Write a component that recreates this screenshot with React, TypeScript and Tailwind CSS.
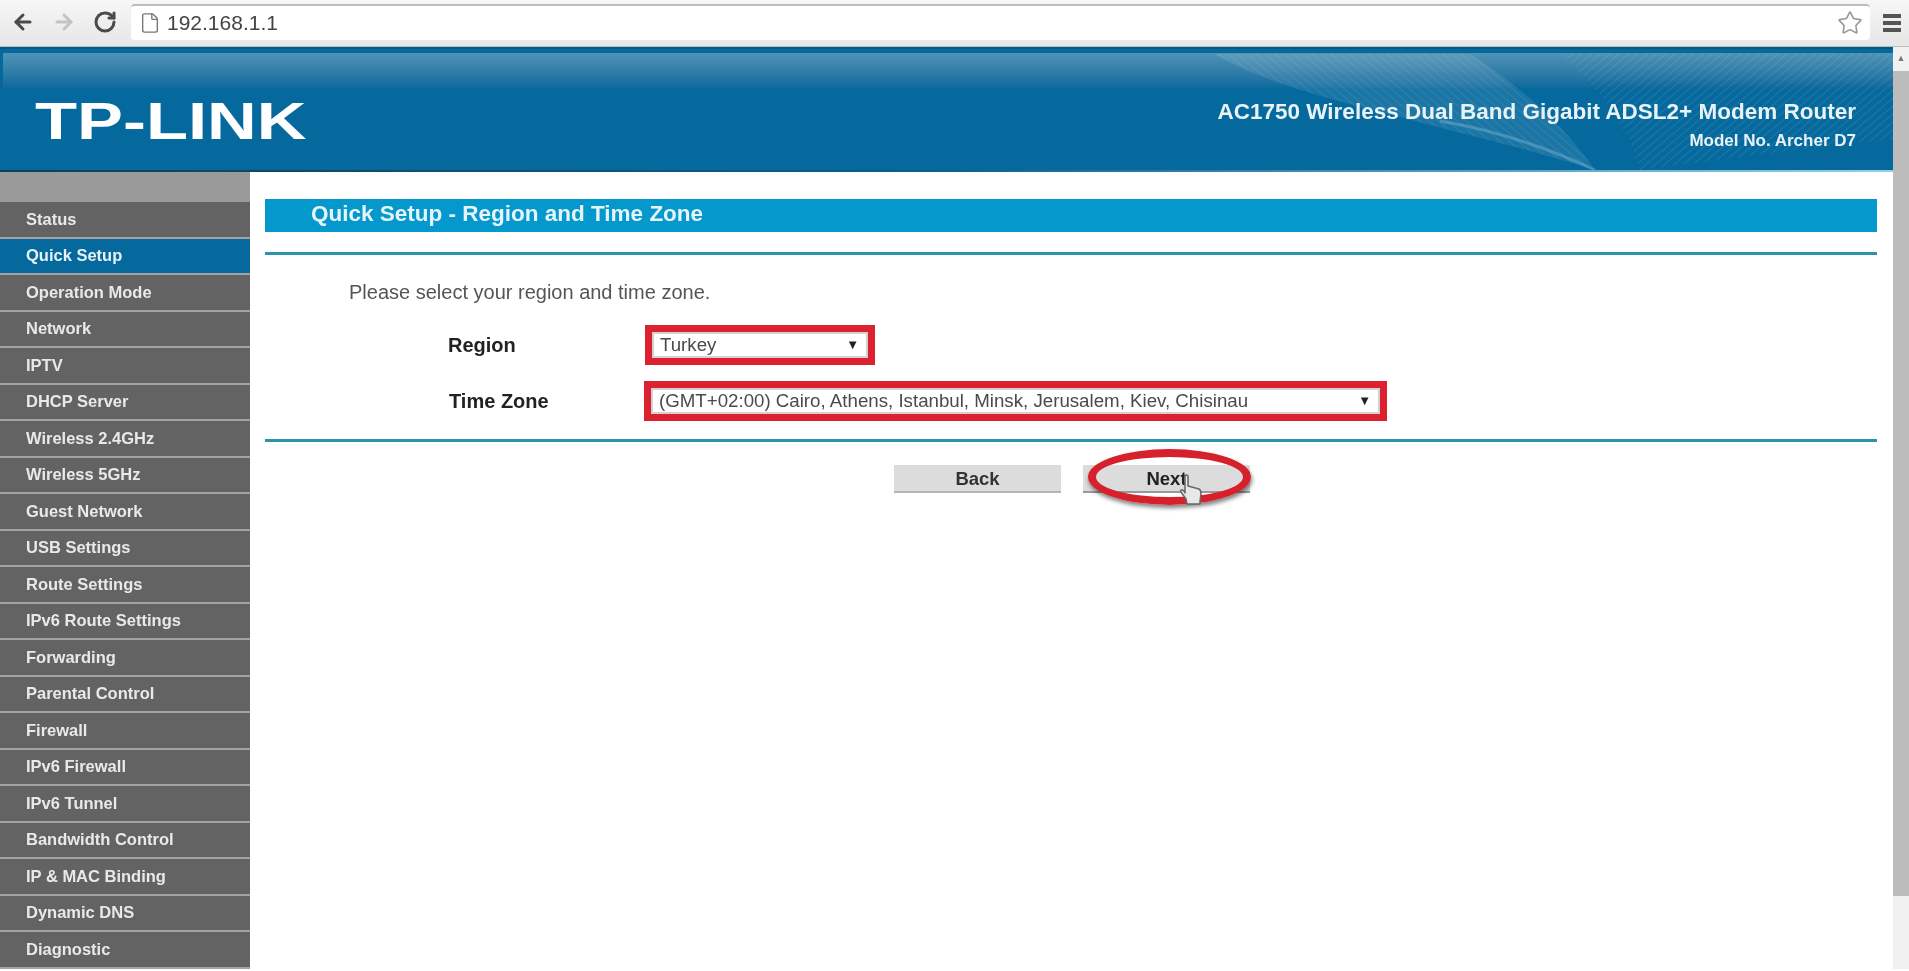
import { ArrowLeft, ArrowRight, File, RotateCw, Star } from "lucide-react";

const menu = [
  "Status",
  "Quick Setup",
  "Operation Mode",
  "Network",
  "IPTV",
  "DHCP Server",
  "Wireless 2.4GHz",
  "Wireless 5GHz",
  "Guest Network",
  "USB Settings",
  "Route Settings",
  "IPv6 Route Settings",
  "Forwarding",
  "Parental Control",
  "Firewall",
  "IPv6 Firewall",
  "IPv6 Tunnel",
  "Bandwidth Control",
  "IP & MAC Binding",
  "Dynamic DNS",
  "Diagnostic",
];

function Toolbar() {
  return (
    <div className="h-[47px] flex items-center bg-gradient-to-b from-[#f7f7f7] to-[#e6e6e6] border-b border-[#bdbdbd]">
      <div className="w-[131px] flex items-center pl-[11px] pb-[2px] gap-[17px] text-[#4a4a4a]">
        <ArrowLeft size={24} strokeWidth={3} />
        <ArrowRight size={24} strokeWidth={3} className="text-[#c4c4c4]" />
        <RotateCw size={24} strokeWidth={3} />
      </div>
      <div className="w-[1739px] h-[36px] mb-[3px] flex items-center bg-white border-t-2 border-[#bcbcbc] rounded-sm pl-[8px] pr-[7px]">
        <File size={22} strokeWidth={1.5} className="text-[#777]" />
        <span className="ml-[6px] text-[21px] text-[#444]">192.168.1.1</span>
        <Star size={26} strokeWidth={1.5} className="ml-auto text-[#999]" />
      </div>
      <div className="ml-[13px] flex flex-col gap-[3px]">
        <span className="block w-[18px] h-[4px] bg-[#555]" />
        <span className="block w-[18px] h-[4px] bg-[#555]" />
        <span className="block w-[18px] h-[4px] bg-[#555]" />
      </div>
    </div>
  );
}

function Header() {
  return (
    <div className="relative h-[125px] bg-[#06699d] border-t-2 border-t-[#045a88] flex items-center justify-between pl-[35px] pr-[37px]">
      <div className="absolute left-[3px] right-0 top-[4px] h-[36px] bg-gradient-to-b from-[#4f93b5] to-[#06699d]" />
      <svg className="absolute inset-0 w-full h-full" viewBox="0 0 1893 123" preserveAspectRatio="none" fill="none">
        <defs>
          <pattern id="hatch" width="6" height="6" patternUnits="userSpaceOnUse" patternTransform="rotate(-40)">
            <line x1="0" y1="0" x2="6" y2="0" stroke="#ffffff" strokeOpacity="0.13" strokeWidth="1.5" />
          </pattern>
          <pattern id="hatch2" width="6" height="6" patternUnits="userSpaceOnUse" patternTransform="rotate(40)">
            <line x1="0" y1="0" x2="6" y2="0" stroke="#ffffff" strokeOpacity="0.1" strokeWidth="1.5" />
          </pattern>
        </defs>
        <path d="M1215 5 C1290 50 1430 70 1595 121 C1560 70 1510 30 1470 5 Z" fill="#ffffff" fillOpacity="0.09" />
        <path d="M1215 5 C1290 50 1430 70 1595 121 C1560 70 1510 30 1470 5 Z" fill="url(#hatch2)" />
        <path d="M1560 5 L1893 5 L1893 90 C1800 100 1720 110 1640 121 C1630 80 1600 40 1560 5 Z" fill="url(#hatch)" />
        <path d="M1440 72 C1500 82 1550 100 1595 121" stroke="#a5d0e3" strokeOpacity="0.3" strokeWidth="3" />
      </svg>
      <div className="absolute left-0 right-0 bottom-0 h-[2px] bg-gradient-to-r from-[#123f58] via-[#0b5f8d] to-[#8fd3ea]" />
      <span className="relative block origin-left scale-x-[1.35] font-bold text-[51px] leading-none text-white mt-[22px]">
        TP-LINK
      </span>
      <div className="relative text-right text-[#e8f3f8] font-bold mt-[27px]">
        <div className="text-[22.5px] leading-[28px]">AC1750 Wireless Dual Band Gigabit ADSL2+ Modem Router</div>
        <div className="text-[17px] leading-[20px] mt-[5px]">Model No. Archer D7</div>
      </div>
    </div>
  );
}

function Sidebar() {
  return (
    <div className="w-[250px] shrink-0">
      <div className="h-[30px] bg-[#9a9a9a]" />
      {menu.map((item) => (
        <div
          key={item}
          className={`h-[36.5px] pl-[26px] flex items-center font-bold text-[16.5px] border-b-2 border-[#a3a3a3] ${
            item === "Quick Setup" ? "bg-[#06699d] text-[#e6f2f7]" : "bg-[#636363] text-[#e9e9e9]"
          }`}
        >
          {item}
        </div>
      ))}
    </div>
  );
}

function Select({ value, width }: { value: string; width: string }) {
  return (
    <div className={`border-[7px] border-[#dc2130] ${width}`}>
      <div className="h-[26px] flex items-center justify-between bg-white border-2 border-[#d2d2d2] pl-[6px] pr-[7px] text-[18.7px] text-[#4a4a4a]">
        <span>{value}</span>
        <span className="text-[13px] text-[#222]">▼</span>
      </div>
    </div>
  );
}

function Main() {
  return (
    <div className="flex-1 pl-[15px] pr-[16px] pt-[27px]">
      <div className="h-[33px] bg-[#0598cc] pl-[46px] flex items-center pb-[3px] font-bold text-[22.5px] text-[#e6f5fb]">
        Quick Setup - Region and Time Zone
      </div>
      <div className="h-[3px] mt-[20px] bg-[#2d93a8]" />

      <p className="mt-[25px] pl-[84px] text-[20px] leading-[24px] text-[#555]">
        Please select your region and time zone.
      </p>

      <div className="mt-[21px] flex items-center pl-[183px]">
        <span className="w-[197px] font-bold text-[20px] text-[#222]">Region</span>
        <Select value="Turkey" width="w-[230px]" />
      </div>
      <div className="mt-[16px] flex items-center pl-[184px]">
        <span className="w-[195px] font-bold text-[20px] text-[#222]">Time Zone</span>
        <Select value="(GMT+02:00) Cairo, Athens, Istanbul, Minsk, Jerusalem, Kiev, Chisinau" width="w-[743px]" />
      </div>

      <div className="h-[3px] mt-[18px] bg-[#2d93a8]" />

      <div className="mt-[23px] flex pl-[629px] gap-[22px]">
        <button className="w-[167px] h-[28px] bg-[#dcdcdc] border-b-2 border-[#b5b5b5] font-bold text-[18.5px] text-[#333]">
          Back
        </button>
        <div className="relative">
          <button className="w-[167px] h-[28px] bg-[#dcdcdc] border-b-2 border-[#999] font-bold text-[18.5px] text-[#222]">
            Next
          </button>
          <div className="absolute left-[5px] top-[-16px] w-[163px] h-[56px] rounded-[50%] border-[8px] border-[#d6202c] shadow-[1px_3px_4px_rgba(0,0,0,0.5)]" />
          <svg className="absolute left-[97px] top-[8px] w-[24px] h-[34px]" viewBox="0 0 24 32" fill="#e8e8e8" stroke="#666" strokeWidth="1.5" strokeLinejoin="round">
            <path d="M5 2 C5 0.8 8 0.8 8 2 L8 12 L19 15 C21 16 21 18 21 20 L20 27 L20 30 L7 30 L6 25 L1 18 C0 16 2 15 4 17 L5 19 Z" />
          </svg>
        </div>
      </div>
    </div>
  );
}

function Scrollbar() {
  return (
    <div className="w-[16px] shrink-0 flex flex-col bg-[#f1f1f1]">
      <div className="h-[24px] flex items-center justify-center text-[9px] text-[#777]">▲</div>
      <div className="h-[825px] bg-[#bcbcbc]" />
    </div>
  );
}

export default function App() {
  return (
    <div className="w-[1909px] h-[971px] overflow-hidden bg-white font-['Liberation_Sans',Arial,sans-serif] blur-[0.4px]">
      <Toolbar />
      <div className="flex">
        <div className="flex-1">
          <Header />
          <div className="flex">
            <Sidebar />
            <Main />
          </div>
        </div>
        <Scrollbar />
      </div>
    </div>
  );
}
